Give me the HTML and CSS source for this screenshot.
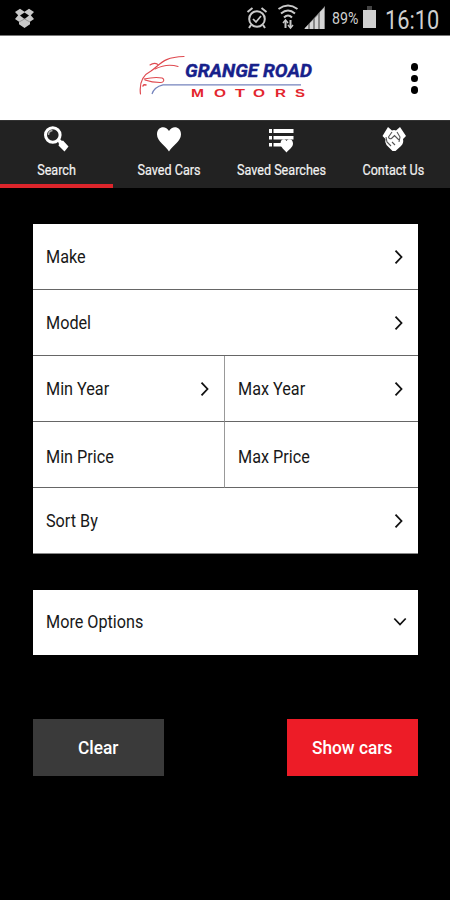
FILE: index.html
```html
<!DOCTYPE html>
<html lang="en">
<head>
<meta charset="utf-8">
<title>Grange Road Motors</title>
<link rel="stylesheet" href="styles.css">
</head>
<body>
<div class="status">
  <svg class="dropbox" width="21" height="21" viewBox="0 0 21 21"><path d="M6 .8 10.5 3.7 15 .8 20 4 16.800 7.300 20 11 16 13.800v2.400L10.500 20 5 16.200v-2.400L1 11l3.200-3.700L1 4Z" fill="#c8c8c8"/><path d="m10.500 4.500 4.500 3-4.500 3.500L6 7.500Z" fill="#000"/><path d="m5 14 5.500-3 5.500 3" fill="none" stroke="#888" stroke-width=".8"/></svg>
  <svg class="alarm" width="22" height="24" viewBox="0 0 22 24" fill="none" stroke="#c9c9c9" stroke-width="2"><circle cx="11" cy="13" r="7.800"/><path d="m1.500 6 5-4M20.500 6l-5-4M5 19l-2 3M17 19l2 3"/><path d="m7 13 3 3 5-6" stroke-width="1.700"/></svg>
  <svg class="wifi" width="22" height="26" viewBox="0 0 22 26" fill="none" stroke="#c9c9c9" stroke-width="2"><path d="M1.500 5q9.500-7 19 0M4 9.500q7-6 14 0M7 13.500q4-4 8 0"/><path d="M8.500 17v7M13.500 16v7"/><path d="m6 19 2.500-3 2.500 3M11 21l2.500 3 2.500-3" stroke-width="1.500"/></svg>
  <svg class="signal" width="21" height="23" viewBox="0 0 21 23"><path d="M0 23 21 0v23Z" fill="#888"/><path d="M1 23v-1l3-3v4ZM6 23v-6l3-3v9ZM11 23V12l3-3v14ZM16 23V6l4-4v21Z" fill="#d5d5d5"/></svg>
  <span class="pct"><span>89%</span></span>
  <svg class="battery" width="13" height="23" viewBox="0 0 13 23"><path d="M4 0h5v4H4Z" fill="#444"/><path d="M0 4h13v18H0Z" fill="#d0d0d0"/></svg>
  <span class="clock"><span>16:10</span></span>
</div>
<header class="header">
  <svg class="logo" width="180" height="50" viewBox="0 0 180 50">
    <g fill="none" stroke="#df4a50" stroke-linecap="round">
      <path d="M2.500 41C1 29 5 22 13 18 23 11 25 4 46 3.500" stroke-width="1.200"/>
      <path d="M12 12q4-3 8-.500M17 16Q29 10 40 13.500M6 26q11-2.500 18-1c3 1 2 5-2 4.500q-8 0-15-2.500" stroke-width="1.100"/>
      <path d="M5 33q1-2 3-1" stroke-width="1.500"/>
    </g>
    <path d="M14 41q2-7 11-9.200h138" fill="none" stroke="#7584bd" stroke-width="1.200"/>
    <text class="logo-name" x="47" y="23.500" textLength="127" lengthAdjust="spacingAndGlyphs">GRANGE ROAD</text>
    <g class="logo-sub"><text x="53" y="43.500" textLength="13" lengthAdjust="spacingAndGlyphs">M</text><text x="76" y="43.500" textLength="12" lengthAdjust="spacingAndGlyphs">O</text><text x="97" y="43.500" textLength="10" lengthAdjust="spacingAndGlyphs">T</text><text x="115" y="43.500" textLength="12" lengthAdjust="spacingAndGlyphs">O</text><text x="137" y="43.500" textLength="11" lengthAdjust="spacingAndGlyphs">R</text><text x="157" y="43.500" textLength="10" lengthAdjust="spacingAndGlyphs">S</text></g>
  </svg>
  <div class="menu"><i></i><i></i><i></i></div>
</header>
<nav class="tabs">
  <div class="tab active">
    <svg width="26" height="28" viewBox="0 0 26 28"><circle cx="9.800" cy="10" r="7.300" fill="none" stroke="#fff" stroke-width="3"/><path d="M5.500 10q0-4 4-4.500" fill="none" stroke="#aaa" stroke-width="1.500"/><path d="m14.500 15.500 2-2 2.500 2.500 1-.500 5.500 6-4 5-6-6 .5-1.500Z" fill="#fff"/></svg>
    <span>Search</span>
  </div>
  <div class="tab">
    <svg width="26" height="28" viewBox="0 0 26 28"><path d="M13 26.500C10 21 1 16.500 1 9.500 1 1 10 0 13 6 16 0 25 1 25 9.500 25 16.500 16 21 13 26.500Z" fill="#fff"/></svg>
    <span>Saved Cars</span>
  </div>
  <div class="tab">
    <svg width="26" height="28" viewBox="0 0 26 28"><path d="M1 4h3v4H1ZM5.500 4H25.500v4h-20ZM1 11h3v3.500H1ZM5.500 11h20v3.500h-20ZM1 18h3v3.500H1ZM5.500 18H14v3.500H5.500Z" fill="#fff"/><path d="M18.500 27.500c-2-3-6-5-6-9 0-5 4.500-5.500 6-2.500 1.500-3 6.500-2.500 6.500 2.500 0 4-4.500 6-6.500 9Z" fill="#fff"/></svg>
    <span>Saved Searches</span>
  </div>
  <div class="tab">
    <svg width="26" height="28" viewBox="0 0 26 28"><path d="m7 2 4 3.500q2-1 4 0L19 2l6 9-3 3q1 4-2 7l-5.500 5h-3L5.500 20q-2-3-1-6l-3-3Z" fill="#fff"/><path d="m11 7-3.500 5q1 3 3.500 1l2.500-2.500 5 5M16 7l3 5-1 5M5 12l1 5 4 4M11 17l3 3" fill="none" stroke="#555" stroke-width="1.100"/></svg>
    <span>Contact Us</span>
  </div>
</nav>
<main class="main">
  <div class="form">
    <div class="field wide"><span>Make</span><svg class="chev" viewBox="0 0 10 16"><path d="m1.500 1.700 6 6.300-6 6.300"/></svg></div>
    <div class="field wide"><span>Model</span><svg class="chev" viewBox="0 0 10 16"><path d="m1.500 1.700 6 6.300-6 6.300"/></svg></div>
    <div class="field left"><span>Min Year</span><svg class="chev" viewBox="0 0 10 16"><path d="m1.500 1.700 6 6.300-6 6.300"/></svg></div>
    <div class="field right"><span>Max Year</span><svg class="chev" viewBox="0 0 10 16"><path d="m1.500 1.700 6 6.300-6 6.300"/></svg></div>
    <div class="field left price"><span>Min Price</span></div>
    <div class="field right price"><span>Max Price</span></div>
    <div class="field wide last"><span>Sort By</span><svg class="chev" viewBox="0 0 10 16"><path d="m1.500 1.700 6 6.300-6 6.300"/></svg></div>
  </div>
  <div class="field more"><span>More Options</span><svg class="down" viewBox="0 0 14 10"><path d="m1.300 1.500 5.700 6 5.700-6"/></svg></div>
  <div class="actions">
    <button class="btn clear"><span>Clear</span></button>
    <button class="btn show"><span>Show cars</span></button>
  </div>
</main>
</body>
</html>
```
FILE: styles.css
```css
* { box-sizing: border-box; }
body { margin: 0; width: 450px; height: 900px; overflow: hidden; background: #000; font-family: Roboto, sans-serif; }
svg { display: block; flex: none; }

.status { height: 36px; display: flex; align-items: flex-start; background: #000; border-bottom: 1px solid #777; color: #cfcfcf; }
.dropbox { margin: 8px 0 0 14px; }
.alarm { margin: 6px 0 0 211px; }
.wifi { margin: 4px 0 0 9px; }
.signal { margin: 6px 0 0 5px; }
.pct { width: 28px; margin: 9px 0 0 7px; font-size: 16.500px; line-height: 20px; }
.pct span { display: inline-block; transform: scaleX(.86); transform-origin: left; }
.battery { margin: 6px 0 0 3px; }
.clock { margin: 6px 0 0 9px; font-size: 26px; line-height: 29px; }
.clock span { display: inline-block; transform: scaleX(.84); transform-origin: left; }

.header { height: 84px; display: flex; background: #fff; }
.logo { margin: 17px 0 0 138px; }
.logo-name { font: italic 700 18px Roboto, sans-serif; fill: #17218b; stroke: #17218b; stroke-width: .4px; }
.logo-sub { font: 700 11px "Liberation Sans", sans-serif; fill: #e3262e; }
.menu { display: flex; flex-direction: column; gap: 4px; margin: 27px 0 0 92.500px; }
.menu i { width: 7px; height: 7.500px; border-radius: 50%; background: #000; }

.tabs { height: 68px; display: grid; grid-template-columns: repeat(4, 1fr); background: #222; border-top: 1px solid #333; }
.tab { display: flex; flex-direction: column; align-items: center; padding-top: 4px; color: #f2f2f2; font-size: 14px; line-height: 18px; white-space: nowrap; }
.tab span { margin-top: 8px; transform: scaleX(.9); -webkit-text-stroke: .2px #f2f2f2; }
.active { border-bottom: 4px solid #dc252b; }

.main { padding: 36px 32px 0 32.500px; }
.form { display: grid; grid-template-columns: 192.500px 193px; grid-template-rows: repeat(5, 66px); }
.wide { grid-column: 1 / 3; }
.field { display: flex; align-items: center; justify-content: space-between; padding: 0 14px 0 13px; background: #fff; border-bottom: 1px solid #666; color: #181818; font-size: 18px; line-height: 24px; }
.field span { transform: scaleX(.9); transform-origin: left; padding-top: 1px; white-space: nowrap; }
.left { border-right: 1px solid #999; }
.price span { padding-top: 4px; }
.last { border-bottom-color: #888; }
.last span { padding-top: 1px; }
.chev { width: 10px; height: 16px; }
.down { width: 14px; height: 10px; margin-right: -3px; }
.chev path, .down path { fill: none; stroke: #111; stroke-width: 1.800; }
.more { height: 65px; margin-top: 35.500px; border: 0; }
.more span { padding-top: 0; }
.actions { display: flex; justify-content: space-between; margin-top: 64px; }
.btn { width: 131px; height: 57px; padding: 0; border: 0; color: #fff; font: 500 19px/24px Roboto, sans-serif; }
.btn span { display: inline-block; transform: scaleX(.91); padding-top: 1px; }
.clear { background: #3a3a3a; }
.show { background: #ed1c27; }
```
